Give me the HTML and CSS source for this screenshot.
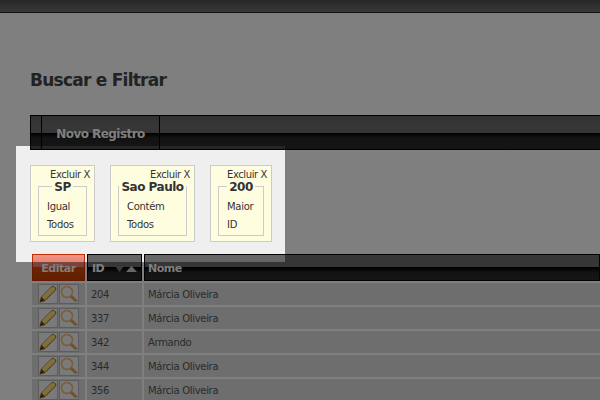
FILE: index.html
```html
<!DOCTYPE html>
<html lang="pt-BR">
<head>
    <meta charset="UTF-8">
    <title>Buscar e Filtrar</title>
    <link rel="stylesheet" href="styles.css">
</head>
<body>
    <div class="topbar"></div>
    <div class="content">
        <h1>Buscar e Filtrar</h1>
        <div class="toolbar">
            <span class="tool-first"></span>
            <a class="tool-btn">Novo Registro</a>
        </div>
        <div class="filters">
            <div class="card">
                <a class="remove">Excluir X</a>
                <fieldset>
                    <legend>SP</legend>
                    <p>Igual</p>
                    <p>Todos</p>
                </fieldset>
            </div>
            <div class="card">
                <a class="remove">Excluir X</a>
                <fieldset>
                    <legend>Sao Paulo</legend>
                    <p>Contém</p>
                    <p>Todos</p>
                </fieldset>
            </div>
            <div class="card">
                <a class="remove">Excluir X</a>
                <fieldset>
                    <legend>200</legend>
                    <p>Maior</p>
                    <p>ID</p>
                </fieldset>
            </div>
        </div>
        <table>
            <thead>
                <tr>
                    <th class="col-edit">Editar</th>
                    <th class="col-id">
                        <div class="sort-head">
                            ID
                            <svg width="22" height="8" viewBox="0 0 22 8"><path class="arrow-off" d="M0 1h9L4.500 7z"/><path class="arrow-on" d="M11 7h11L16.500 1z"/></svg>
                        </div>
                    </th>
                    <th>Nome</th>
                </tr>
            </thead>
            <tbody id="tbody"></tbody>
        </table>
    </div>
    <div class="spotlight"></div>
    <script>
      let rows = [
        [204, "Márcia Oliveira"],
        [337, "Márcia Oliveira"],
        [342, "Armando"],
        [344, "Márcia Oliveira"],
        [356, "Márcia Oliveira"]
      ];
      let pencil = `<svg width="18" height="18" viewBox="0 0 18 18"><path d="M1 17l1.500-5L12.500 2c1-1 2-1 3 0l.5.500c1 1 1 2 0 3L6 15.500z" fill="#ffe070" stroke="#8a5a20"/><path d="M1 17l1.500-5 3.500 3.500z" fill="#6a4518"/><path d="M4 11.500l9-9" stroke="#fff6c8"/></svg>`;
      let lens = `<svg width="18" height="18" viewBox="0 0 18 18"><circle cx="7" cy="7" r="5.500" fill="none" stroke="#f0b878" stroke-width="1.500"/><path d="M11 11l5.500 5.500" stroke="#e0a060" stroke-width="3"/></svg>`;
      let data = "";
      for (let i = 0; i < rows.length; i++) {
        data += `
          <tr>
            <td class="actions"><span class="icon-btn">${pencil}</span><span class="icon-btn">${lens}</span></td>
            <td>${rows[i][0]}</td>
            <td>${rows[i][1]}</td>
          </tr>`;
      }
      document.getElementById("tbody").innerHTML = data;
    </script>
</body>
</html>
```

FILE: styles.css
```css
html, body {
  margin: 0;
  height: 400px;
  overflow: hidden;
}
body {
  background: #fff;
  color: #444;
  font-family: "DejaVu Sans", sans-serif;
  font-size: 10px;
  letter-spacing: -0.3px;
}
.topbar {
  height: 12px;
  background: linear-gradient(#505050, #707070);
  border-bottom: 1px solid #222;
}
.content {
  box-sizing: border-box;
  width: 600px;
  height: 387px;
  padding-left: 30px;
  overflow: hidden;
}
h1 {
  margin: 57px 0 25px;
  font-size: 17px;
  line-height: 20px;
  letter-spacing: -0.75px;
  color: #444;
}
.toolbar {
  display: flex;
  height: 33px;
  border: 1px solid #000;
  border-right: 0;
  background: linear-gradient(#626262 0, #707070 30%, #6a6a6a 51%, #000 52%, #262626 66%, #2a2a2a 100%);
}
.tool-first {
  width: 10px;
  border-right: 1px solid #000;
}
.tool-btn {
  width: 117px;
  border-right: 1px solid #000;
  color: #fff;
  font-size: 12px;
  font-weight: bold;
  line-height: 36px;
  letter-spacing: -0.55px;
  text-align: center;
}
.filters {
  display: grid;
  grid-template-columns: 65px 85px 62px;
  column-gap: 15px;
  height: 85px;
  padding-top: 15px;
}
.card {
  position: relative;
  z-index: 2;
  box-sizing: border-box;
  height: 77px;
  padding: 3px 7px 0;
  background: #fffde0;
  border: 1px solid #ccc;
  color: #333;
}
.remove {
  display: block;
  height: 10px;
  line-height: 12px;
  letter-spacing: -0.4px;
  text-align: right;
  margin-right: -3px;
}
fieldset {
  box-sizing: border-box;
  min-width: 0;
  height: 57px;
  margin: 0;
  padding: 5px 0 0;
  border: 1px solid #ccc;
}
legend {
  height: 14px;
  margin: 0 auto;
  padding: 0 2px;
  font-size: 12px;
  font-weight: bold;
  line-height: 16px;
  letter-spacing: -0.5px;
  white-space: nowrap;
  color: #333;
}
fieldset p {
  margin: 0;
  padding-left: 8px;
  line-height: 18px;
}
table {
  width: 572px;
  margin-top: 2px;
  border-collapse: separate;
  border-spacing: 2px;
  table-layout: fixed;
}
th {
  box-sizing: border-box;
  height: 27px;
  padding: 2px 0 0 3px;
  border: 1px solid #000;
  background: linear-gradient(#6e6e6e 0, #6c6c6c 48%, #000 50%, #262626 70%, #2a2a2a 100%);
  color: #fff;
  font-size: 11px;
  line-height: 23px;
  letter-spacing: -0.5px;
  text-align: left;
}
th.col-edit {
  width: 53px;
  padding: 2px 0 0;
  border-color: #d03000;
  background: linear-gradient(#ffa090 0, #f08070 48%, #d84a00 50%, #c04000 100%);
  text-align: center;
}
th.col-id {
  width: 55px;
  padding-left: 4px;
}
.sort-head {
  display: flex;
  align-items: center;
  justify-content: space-between;
  padding-right: 4px;
}
.arrow-off {
  fill: #777;
}
.arrow-on {
  fill: #ccc;
}
td {
  height: 21px;
  padding: 1px 0 0 4px;
  background: #dcdcdc;
  color: #555;
  line-height: 21px;
}
td.actions {
  padding: 0;
  font-size: 0;
  text-align: center;
}
.icon-btn {
  display: inline-flex;
  align-items: center;
  justify-content: center;
  box-sizing: border-box;
  width: 20px;
  height: 20px;
  margin-right: 1px;
  background: #f4f4f4;
  border: 1px solid #bbb;
  vertical-align: middle;
}
.spotlight {
  position: absolute;
  left: 16px;
  top: 146px;
  z-index: 1;
  width: 269px;
  height: 116px;
  background: rgba(0, 0, 0, 0.063);
  box-shadow: 0 0 0 800px rgba(0, 0, 0, 0.5);
}
```
